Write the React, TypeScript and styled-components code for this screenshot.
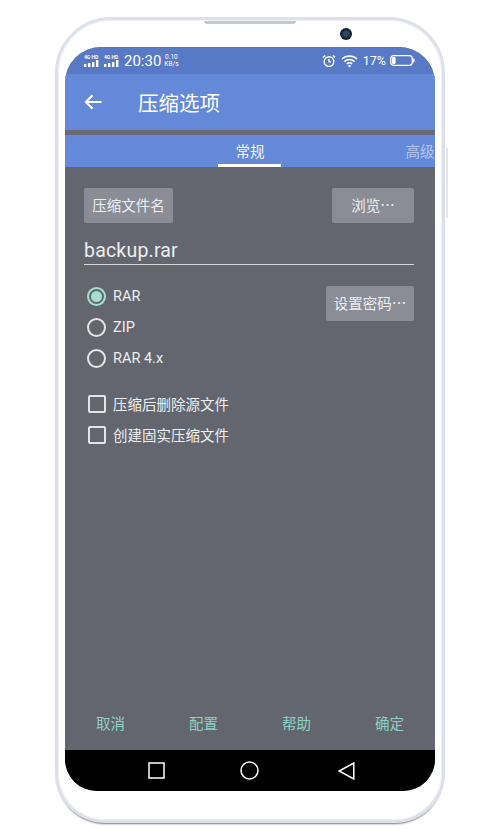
import React from 'react';
import styled, { createGlobalStyle } from 'styled-components';

const GlobalStyle = createGlobalStyle`
    html, body {
        margin: 0;
        padding: 0;
        background: #fff;
    }
    body {
        width: 500px;
        height: 830px;
        overflow: hidden;
        font-family: Roboto, "Noto Sans CJK SC", sans-serif;
    }
`;

const Page = styled.div`
    width: 500px;
    height: 830px;
    padding: 17px 55px 0;
    box-sizing: border-box;
`;

const Phone = styled.div`
    position: relative;
    width: 390px;
    height: 806px;
    box-sizing: border-box;
    padding: 27px 7px 29px;
    background: #fff;
    border: 3px solid #dde0e8;
    border-radius: 56px 56px 50px 50px;
    box-shadow: 0 3px 2px -2px #77777c, inset 0 0 0 1px #eef0f4;
`;

const Speaker = styled.div`
    position: absolute;
    top: 1px;
    left: 50%;
    width: 92px;
    height: 3px;
    margin-left: -46px;
    background: #c4c7cf;
    border-radius: 0 0 3px 3px;
`;

const Camera = styled.div`
    position: absolute;
    top: 8px;
    left: 282px;
    width: 12px;
    height: 12px;
    border-radius: 50%;
    background: radial-gradient(circle, #2d4a68 0 25%, #10192a 60%);
`;

const SideKey = styled.div`
    position: absolute;
    top: 128px;
    right: -6px;
    width: 2px;
    height: 70px;
    background: #e4e6ec;
`;

const Screen = styled.div`
    height: 744px;
    display: flex;
    flex-direction: column;
    overflow: hidden;
    background: #63666f;
    border-radius: 36px 36px 32px 32px;
`;

const StatusBar = styled.div`
    flex: 0 0 27px;
    display: flex;
    align-items: center;
    justify-content: space-between;
    padding: 0 20px 0 19px;
    background: #5779c6;
    color: #fff;
`;

const StatusGroup = styled.div`
    display: flex;
    align-items: center;
`;

const Clock = styled.span`
    font-size: 15px;
`;

const Speed = styled.span`
    margin-left: 3px;
    font-size: 6.5px;
    line-height: 7px;
    text-align: center;
`;

const Percent = styled.span`
    margin: 0 4px 0 5px;
    font-size: 12.5px;
`;

const SignalBox = styled.span`
    display: flex;
    flex-direction: column;
    align-items: flex-start;
    width: 17px;
    margin-right: 3px;
`;

const SignalLabel = styled.span`
    font-size: 5px;
    line-height: 5px;
    font-weight: 700;
    white-space: nowrap;
`;

const AppBar = styled.div`
    flex: 0 0 56px;
    display: flex;
    align-items: center;
    padding-left: 19px;
    background: #6589d9;
    color: #fff;
`;

const Title = styled.div`
    margin-left: 36px;
    font-size: 20.5px;
    font-family: "Noto Sans CJK SC", sans-serif;
`;

const Divider = styled.div`
    flex: 0 0 5px;
    background: #696a77;
`;

const TabBar = styled.div`
    flex: 0 0 32px;
    display: flex;
    padding-left: 100px;
    overflow: hidden;
    background: #6589d9;
`;

const Tab = styled.div<{ $active?: boolean }>`
    position: relative;
    flex: 0 0 170px;
    text-align: center;
    font-size: 14.5px;
    line-height: 32px;
    font-family: "Noto Sans CJK SC", sans-serif;
    color: ${p => (p.$active ? '#f2f5fb' : '#b3c5ec')};

    ${p => p.$active && `
        &::after {
            content: "";
            position: absolute;
            left: 53px;
            bottom: 0;
            width: 63px;
            height: 3px;
            background: #fff;
        }
    `}
`;

const Form = styled.div`
    flex: 1;
    display: flex;
    flex-direction: column;
    padding: 21px 21px 0 19px;
    color: #eceef0;
`;

const SpacedRow = styled.div`
    display: flex;
    justify-content: space-between;
    align-items: flex-start;
`;

const GreyButton = styled.div<{ $width: number }>`
    width: ${p => p.$width}px;
    height: 35px;
    padding-bottom: 2px;
    box-sizing: border-box;
    display: flex;
    align-items: center;
    justify-content: center;
    background: #8a8c96;
    border-radius: 2px;
    font-size: 14.5px;
    font-family: "Noto Sans CJK SC", sans-serif;
    white-space: nowrap;
`;

const FileName = styled.div`
    margin-top: 13px;
    height: 28px;
    line-height: 30px;
    font-size: 19.5px;
    letter-spacing: 0.2px;
    border-bottom: 1px solid #d8d9dd;
`;

const OptionsRow = styled(SpacedRow)`
    margin-top: 21px;
`;

const OptionList = styled.div`
    display: flex;
    flex-direction: column;
`;

const RadioList = styled(OptionList)`
    margin-top: -5px;
`;

const Option = styled.div`
    height: 31px;
    display: flex;
    align-items: center;
    gap: 7px;
    padding-left: 3px;
    font-size: 14.5px;
    font-family: Roboto, "Noto Sans CJK SC", sans-serif;
`;

const RadioMark = styled.span<{ $on?: boolean }>`
    width: 19px;
    height: 19px;
    box-sizing: border-box;
    display: flex;
    align-items: center;
    justify-content: center;
    border: 2px solid ${p => (p.$on ? '#a4dfd2' : '#e3e4e7')};
    border-radius: 50%;

    &::after {
        content: "";
        width: 11px;
        height: 11px;
        border-radius: 50%;
        background: ${p => (p.$on ? '#a4dfd2' : 'transparent')};
    }
`;

const CheckMark = styled.span`
    width: 18px;
    height: 18px;
    margin-left: 1px;
    box-sizing: border-box;
    border: 2px solid #e3e4e7;
    border-radius: 2px;
`;

const CheckList = styled(OptionList)`
    margin-top: 14px;
`;

const ActionBar = styled.div`
    display: grid;
    grid-template-columns: repeat(4, 93px);
    height: 53px;
    margin: 0 -1px;
    padding-bottom: 2px;
    box-sizing: border-box;
`;

const Action = styled.div`
    display: flex;
    align-items: center;
    justify-content: center;
    font-size: 14.5px;
    font-family: "Noto Sans CJK SC", sans-serif;
    color: #8fd0c5;
`;

const NavBar = styled.div`
    flex: 0 0 41px;
    display: flex;
    align-items: center;
    gap: 75px;
    padding-left: 83px;
    background: #000;
`;

const Signal = () => (
    <SignalBox>
        <SignalLabel>4G HD</SignalLabel>
        <svg width="16" height="7" viewBox="0 0 16 7" fill="#fff">
            <rect x="0" y="4" width="2.4" height="3" />
            <rect x="4" y="3" width="2.4" height="4" />
            <rect x="8" y="2" width="2.4" height="5" />
            <rect x="12" y="0" width="2.4" height="7" />
        </svg>
    </SignalBox>
);

const AlarmIcon = () => (
    <svg width="14" height="14" viewBox="0 0 14 14" fill="none" stroke="#fff" strokeWidth="1.4">
        <circle cx="7" cy="7.6" r="4.8" />
        <path d="M7 5v2.8h2M1 3.4 3.2 1.4M13 3.4 10.8 1.4" />
    </svg>
);

const WifiIcon = () => (
    <svg width="17" height="14" viewBox="0 0 17 14" fill="none" stroke="#fff" strokeWidth="1.5" style={{ marginLeft: 5 }}>
        <path d="M1 5a11 11 0 0 1 15 0M3.4 7.6a7.5 7.5 0 0 1 10.2 0M5.8 10a4 4 0 0 1 5.4 0" />
        <circle cx="8.5" cy="12" r="1.2" fill="#fff" stroke="none" />
    </svg>
);

const BatteryIcon = () => (
    <svg width="25" height="11" viewBox="0 0 25 11" fill="none">
        <rect x="0.7" y="0.7" width="21.6" height="9.6" rx="3" stroke="#fff" strokeWidth="1.3" />
        <rect x="2" y="2" width="3.6" height="7" rx="1.2" fill="#fff" />
        <rect x="23" y="3.6" width="1.6" height="3.8" rx="0.8" fill="#fff" />
    </svg>
);

const BackIcon = () => (
    <svg width="18" height="16" viewBox="0 0 18 16" fill="none" stroke="#fff" strokeWidth="2">
        <path d="M17.5 8H2M8.6 1.2 1.8 8l6.8 6.8" />
    </svg>
);

const NavSquare = () => (
    <svg width="17" height="17" viewBox="0 0 17 17" fill="none" stroke="#fff" strokeWidth="1.5">
        <rect x="1" y="1" width="15" height="15" />
    </svg>
);

const NavCircle = () => (
    <svg width="19" height="19" viewBox="0 0 19 19" fill="none" stroke="#fff" strokeWidth="1.5">
        <circle cx="9.5" cy="9.5" r="8.5" />
    </svg>
);

const NavBack = () => (
    <svg width="17" height="18" viewBox="0 0 17 18" fill="none" stroke="#fff" strokeWidth="1.5" style={{ marginLeft: 4 }}>
        <path d="M15.8 1v16L1.2 9z" />
    </svg>
);

export default function App() {
    return (
        <Page>
            <GlobalStyle />
            <Phone>
                <Speaker />
                <Camera />
                <SideKey />
                <Screen>
                    <StatusBar>
                        <StatusGroup>
                            <Signal />
                            <Signal />
                            <Clock>20:30</Clock>
                            <Speed>0.10<br />KB/s</Speed>
                        </StatusGroup>
                        <StatusGroup>
                            <AlarmIcon />
                            <WifiIcon />
                            <Percent>17%</Percent>
                            <BatteryIcon />
                        </StatusGroup>
                    </StatusBar>
                    <AppBar>
                        <BackIcon />
                        <Title>压缩选项</Title>
                    </AppBar>
                    <Divider />
                    <TabBar>
                        <Tab $active>常规</Tab>
                        <Tab>高级</Tab>
                    </TabBar>
                    <Form>
                        <SpacedRow>
                            <GreyButton $width={89}>压缩文件名</GreyButton>
                            <GreyButton $width={82}>浏览…</GreyButton>
                        </SpacedRow>
                        <FileName>backup.rar</FileName>
                        <OptionsRow>
                            <RadioList>
                                <Option><RadioMark $on />RAR</Option>
                                <Option><RadioMark />ZIP</Option>
                                <Option><RadioMark />RAR 4.x</Option>
                            </RadioList>
                            <GreyButton $width={88}>设置密码…</GreyButton>
                        </OptionsRow>
                        <CheckList>
                            <Option><CheckMark />压缩后删除源文件</Option>
                            <Option><CheckMark />创建固实压缩文件</Option>
                        </CheckList>
                    </Form>
                    <ActionBar>
                        <Action>取消</Action>
                        <Action>配置</Action>
                        <Action>帮助</Action>
                        <Action>确定</Action>
                    </ActionBar>
                    <NavBar>
                        <NavSquare />
                        <NavCircle />
                        <NavBack />
                    </NavBar>
                </Screen>
            </Phone>
        </Page>
    );
}
